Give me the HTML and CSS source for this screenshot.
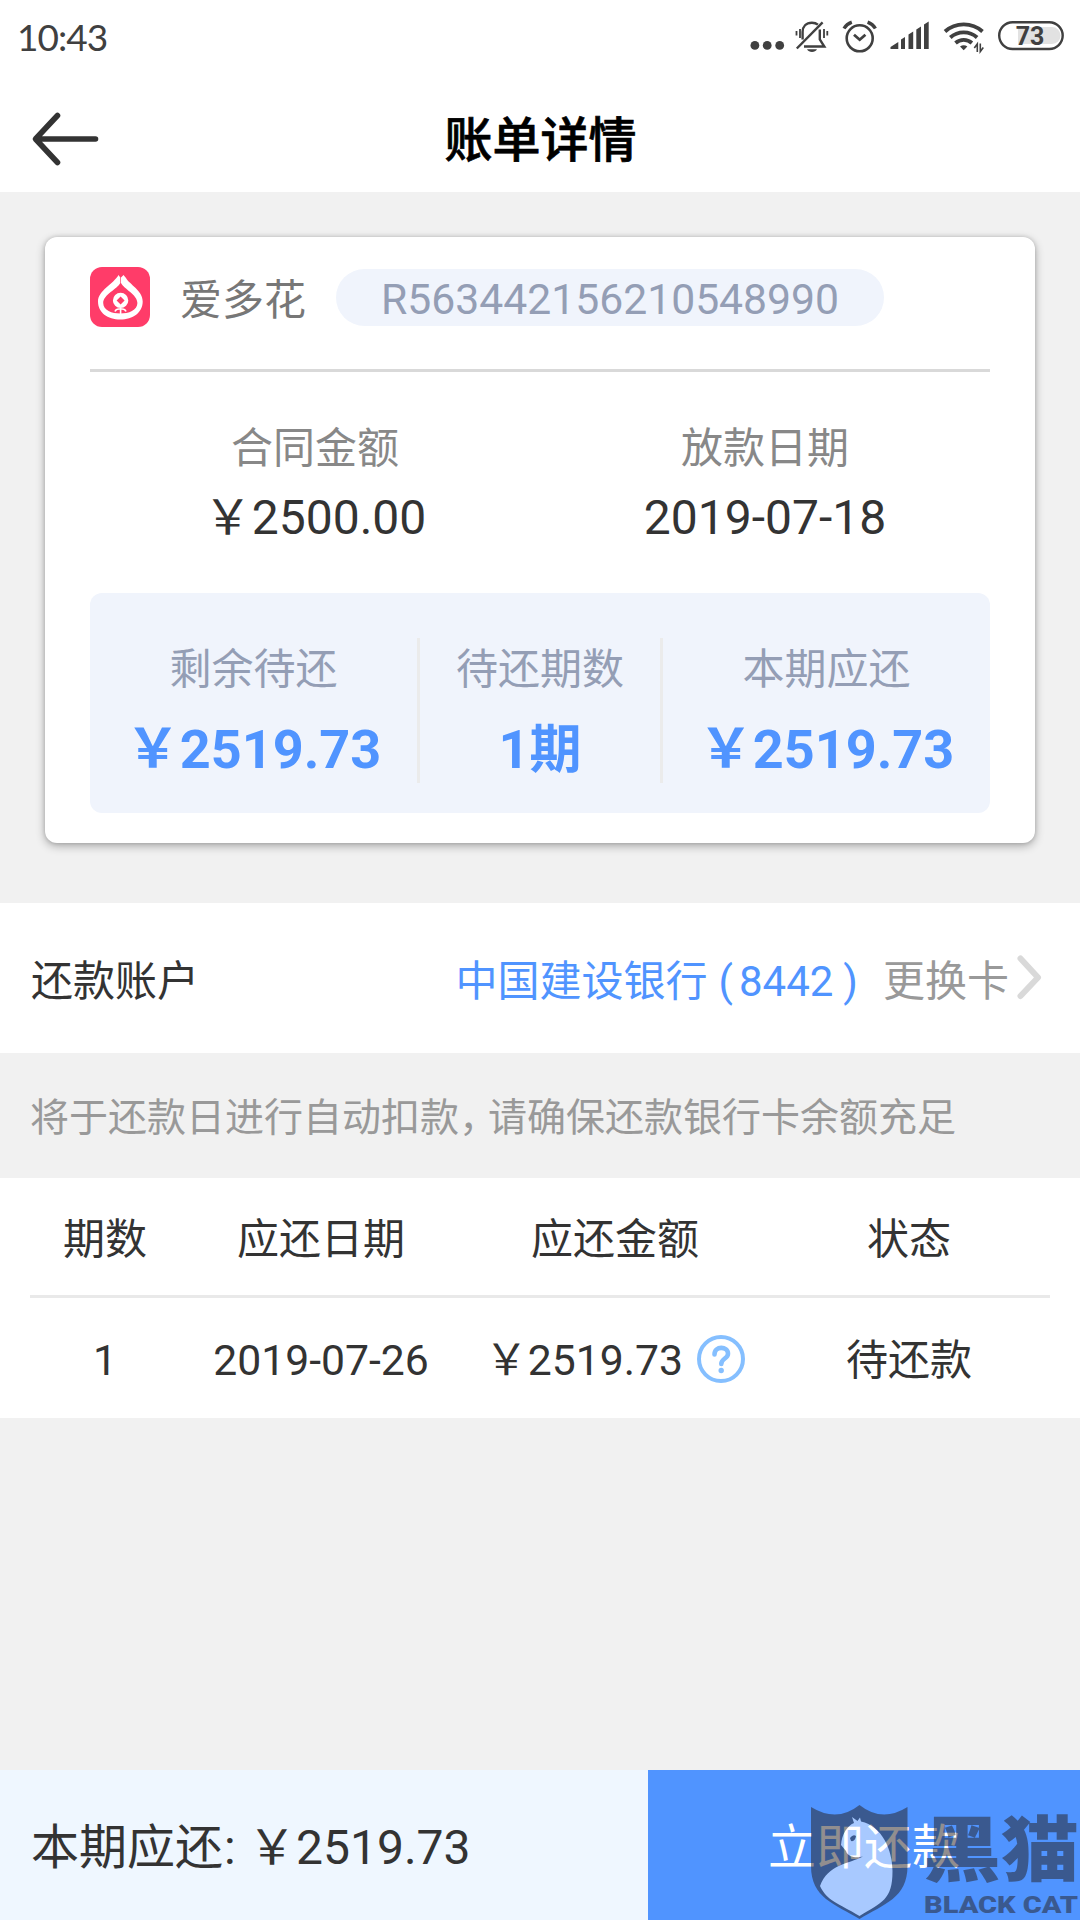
FILE: index.html
```html
<!DOCTYPE html>
<html lang="zh-CN">
<head>
  <meta charset="UTF-8">
  <meta name="viewport" content="width=device-width, initial-scale=1.0">
  <title>账单详情</title>
  <link rel="stylesheet" href="styles.css">
</head>
<body>
  <div class="page">
    <div class="status-bar">
      <span class="time">10:43</span>
      <div class="status-icons">
        <svg width="40" height="60" viewBox="0 0 40 60" fill="#404040">
          <circle cx="4.9" cy="45.4" r="4.4"/><circle cx="17.2" cy="45.4" r="4.4"/><circle cx="29.7" cy="45.4" r="4.4"/>
        </svg>
        <svg width="44" height="60" viewBox="0 0 44 60" fill="none" stroke="#404040" stroke-width="2.4">
          <path d="M12.6 39.5V32c0-5.5 3.5-9.3 9.3-9.3 2.5 0 4.5 0.7 6 2"/>
          <path d="M29.8 29.5V39.5L34.3 46.5H14"/>
          <path d="M6.8 48.5L32.6 22.3"/>
          <path d="M17 49.3h10c-1 1.9-2.8 2.7-5 2.7s-4-.8-5-2.7z" fill="#404040" stroke="none"/>
          <path d="M6.5 31v4.5M10 29v9M34 29v9M37.3 31v4.5" stroke-width="1.8"/>
        </svg>
        <svg width="50" height="60" viewBox="0 0 50 60" fill="none" stroke="#404040" stroke-width="2.6">
          <circle cx="25.7" cy="38.3" r="13"/>
          <path d="M20 34.7l5.7 5 5.7-5" stroke-width="2.8"/>
          <path d="M10 28.5c1.8-3 4.3-5 7.8-6.3M41.4 28.5c-1.8-3-4.3-5-7.8-6.3" stroke-width="3.4"/>
        </svg>
        <svg width="52" height="60" viewBox="0 0 52 60" fill="#404040">
          <path d="M6.5 49v-2l7.8-5V49zM17 49V39.5l4-2.5V49zM24.5 49V34.5l4.7-3V49zM32.3 49V29.5l4.7-3V49zM40 49V24.5l4.7-3V49z"/>
        </svg>
        <svg width="54" height="60" viewBox="0 0 54 60" fill="none" stroke="#404040" stroke-width="3.8">
          <path d="M9 31.5c10.5-9.5 27-9.5 37.5 0M14.3 37.5c7.5-6.8 19.3-6.8 26.8 0M19.5 43c4.7-4.2 11.7-4.2 16.4 0"/>
          <path d="M24 46.5q3.7-2.6 7.4 0l-3.7 3.8z" fill="#404040" stroke="none"/>
          <path d="M41.3 52v-8l-3 4M44.3 43.5v8l3-4" stroke-width="1.6"/>
        </svg>
        <svg width="80" height="60" viewBox="0 0 80 60">
          <path d="M28 27h34a8.5 8.5 0 0 1 0 17H28z" fill="#e2e2e2"/>
          <rect x="9.2" y="22.2" width="63.5" height="26.8" rx="13.4" fill="none" stroke="#404040" stroke-width="2.4"/>
          <text x="40" y="44.7" class="battery-text">73</text>
        </svg>
      </div>
    </div>

    <div class="nav">
      <svg class="back" width="70" height="60" viewBox="0 0 70 60" fill="none" stroke="#333" stroke-width="5.6" stroke-linecap="round" stroke-linejoin="round">
        <path d="M65.5 30H6M27.5 6.5L5.5 30L27.5 53.5"/>
      </svg>
      <h1>账单详情</h1>
    </div>

    <div class="card">
      <div class="card-head">
        <svg class="logo" width="60" height="60" viewBox="0 0 60 60">
          <rect width="60" height="60" rx="12" fill="#ff3c69"/>
          <path fill="#fff" d="M28.5 8L30.3 10.5V16C27.5 22 13.2 27.5 13.2 36C13.2 43.5 22 46.5 30.3 46.5S47.4 43.5 47.4 36C47.4 27.5 33.8 22 31 16V10.5L33.5 8L36 11C39.5 17.5 52.7 23.5 52.7 34.5C52.7 45.5 43 52.5 30.3 52.5S8 45.5 8 34.5C8 23.5 23.5 17 28.5 8Z"/>
          <path fill="#fff" fill-rule="evenodd" d="M30.6 25.7a7.7 7.7 0 1 1 0 15.4a7.7 7.7 0 1 1 0-15.4zM30.6 29.4l-4 4 4 4 4-4z"/>
          <path fill="none" stroke="#fff" stroke-width="1.6" d="M30.6 41v7M25 44.5q1-3 5-2.5M36 44.5q-1-3-5-2.5"/>
        </svg>
        <span class="brand">爱多花</span>
        <span class="order-no">R563442156210548990</span>
      </div>
      <div class="summary">
        <div class="summary-item">
          <p class="label">合同金额</p>
          <p class="value">￥2500.00</p>
        </div>
        <div class="summary-item">
          <p class="label">放款日期</p>
          <p class="value">2019-07-18</p>
        </div>
      </div>
      <div class="panel">
        <div class="panel-item">
          <p class="label">剩余待还</p>
          <p class="amount">￥2519.73</p>
        </div>
        <div class="panel-item middle">
          <p class="label">待还期数</p>
          <p class="amount">1<span class="unit">期</span></p>
        </div>
        <div class="panel-item">
          <p class="label">本期应还</p>
          <p class="amount">￥2519.73</p>
        </div>
      </div>
    </div>

    <div class="account">
      <span>还款账户</span>
      <span class="bank">中国建设银行<span class="paren-l">(</span>8442<span class="paren-r">)</span></span>
      <span class="change">更换卡</span>
      <svg width="28" height="46" viewBox="0 0 28 46" fill="none" stroke="#d9d9d9" stroke-width="6" stroke-linecap="round" stroke-linejoin="round">
        <path d="M4.5 4.5L22 23.5L4.5 42"/>
      </svg>
    </div>

    <p class="notice">将于还款日进行自动扣款<span class="comma">，</span>请确保还款银行卡余额充足</p>

    <div class="plan">
      <div class="plan-row plan-head">
        <span>期数</span>
        <span>应还日期</span>
        <span>应还金额</span>
        <span>状态</span>
      </div>
      <div class="plan-row">
        <span>1</span>
        <span>2019-07-26</span>
        <span class="due">￥2519.73
          <svg width="48" height="48" viewBox="0 0 48 48" fill="none" stroke="#85bfff">
            <circle cx="24" cy="24" r="22" stroke-width="4"/>
            <path d="M17.5 19.5c0-9 13.5-8.5 13.5-.8 0 5-6.7 4.7-6.7 10.3" stroke-width="4.6" stroke-linecap="round"/>
            <circle cx="24.2" cy="35.5" r="2.7" fill="#85bfff" stroke="none"/>
          </svg>
        </span>
        <span class="state">待还款</span>
      </div>
    </div>

    <div class="footer">
      <div class="total">本期应还<span class="colon">:</span>￥2519.73</div>
      <div class="pay">立即还款
        <svg class="watermark" width="272" height="118" viewBox="0 0 272 118">
          <path fill="#262021" d="M3 5Q29 21 51.5 3Q74 21 99.5 5V64C99.5 96 76 102 51.5 117C27 102 3 96 3 64Z"/>
          <path fill="#fff" d="M44 15L49.5 19L52 15.5L53 19.5C74 24 84.5 48 84.5 69C84.5 98 74 100 51.5 114C30 101 19 99 12 84C20 62 41 62 55 54.5C50 56 40 56 38 49L33 43C34 32 39 24 46 21Z"/>
          <path fill="#262021" d="M42 36q3-4 6-2-1 6-5 5z"/>
          <text class="wm-name" x="115" y="73" textLength="156" lengthAdjust="spacingAndGlyphs">黑猫</text>
          <text class="wm-en" x="116" y="111" textLength="154" lengthAdjust="spacingAndGlyphs">BLACK CAT</text>
        </svg>
      </div>
    </div>
  </div>
</body>
</html>
```
FILE: styles.css
```css
* {
  box-sizing: border-box;
}

body {
  margin: 0;
  background-color: #f1f1f1;
  font-family: Roboto, "Noto Sans CJK SC", sans-serif;
  font-size: 42px;
  color: #333;
}

p, h1 {
  margin: 0;
}

svg {
  display: block;
  flex-shrink: 0;
}

.page {
  display: flex;
  flex-direction: column;
  width: 1080px;
  height: 1920px;
  overflow: hidden;
}

/* status bar */
.status-bar {
  display: flex;
  justify-content: space-between;
  height: 84px;
  padding: 0 10px 0 17px;
  background-color: #fff;
}

.time {
  font-family: Lato, Roboto, sans-serif;
  font-size: 37px;
  line-height: 73px;
  letter-spacing: -1px;
  color: #404040;
}

.status-icons {
  display: flex;
}

.battery-text {
  font-size: 25px;
  font-weight: 700;
  text-anchor: middle;
  fill: #404040;
}

/* title */
.nav {
  display: flex;
  align-items: center;
  height: 108px;
  padding: 0 30px;
  background-color: #fff;
}

h1 {
  flex: 1;
  margin-right: 69px;
  padding-top: 6px;
  font-size: 48px;
  line-height: 60px;
  font-weight: 500;
  -webkit-text-stroke: 0.7px #000;
  color: #000;
  text-align: center;
}

.back {
  margin-top: 2px;
}

/* bill card */
.card {
  height: 606px;
  margin: 45px 45px 60px;
  padding: 0 45px;
  background-color: #fff;
  border-radius: 12px;
  box-shadow: 0 3px 10px rgba(0, 0, 0, 0.3), 0 0 4px rgba(0, 0, 0, 0.15);
}

.card-head {
  display: flex;
  align-items: center;
  height: 135px;
  padding-bottom: 12px;
  border-bottom: 3px solid #d9d9d9;
}

.brand {
  margin: -1px 0 0 30px;
  color: #777;
}

.order-no {
  width: 548px;
  height: 57px;
  margin-left: 30px;
  border-radius: 29px;
  background-color: #f0f4fc;
  color: #949eb5;
  font-size: 42.7px;
  line-height: 60px;
  text-align: center;
}

.summary {
  display: flex;
  height: 221px;
  padding-top: 46px;
}

.summary-item {
  flex: 1;
  text-align: center;
}

.label {
  line-height: 62px;
  color: #888;
}

.value {
  margin-top: 3px;
  font-size: 48px;
  line-height: 70px;
}

.panel {
  display: flex;
  height: 220px;
  padding: 45px 0 30px;
  border-radius: 12px;
  background-color: #f0f4fc;
}

.panel-item {
  width: 327px;
  text-align: center;
}

.panel-item.middle {
  width: 246px;
  border-left: 3px solid #ebebeb;
  border-right: 3px solid #ebebeb;
}

.panel .label {
  padding-top: 1px;
  color: #949eb5;
}

.amount {
  margin-top: 11px;
  font-size: 54px;
  line-height: 75px;
  font-weight: 700;
  color: #5094ff;
}

.unit {
  font-size: 52px;
}

/* repayment account */
.account {
  display: flex;
  align-items: center;
  height: 150px;
  padding: 0 36px 2px 31px;
  background-color: #fff;
}

.bank {
  margin-left: auto;
  color: #5094ff;
}

.paren-l {
  margin: 0 6px 0 11px;
}

.paren-r {
  margin: 0 25px 0 10px;
}

.change {
  margin-right: 7px;
  color: #999;
}

.notice {
  height: 125px;
  padding-left: 30px;
  font-size: 39px;
  line-height: 131px;
  color: #999;
}

.comma {
  letter-spacing: -10px;
}

/* repayment plan */
.plan {
  height: 240px;
  padding: 0 30px;
  background-color: #fff;
}

.plan-row {
  display: grid;
  grid-template-columns: 150px 282px 306px 282px;
  align-items: center;
  height: 120px;
  padding-top: 4px;
  text-align: center;
  font-size: 42.7px;
  line-height: 50px;
}

.plan-head {
  padding-top: 6px;
  font-size: 42px;
  border-bottom: 3px solid #e9e9e9;
}

.due {
  display: flex;
  align-items: center;
  justify-content: center;
}

.due svg {
  margin: -2px 0 0 14px;
}

.state {
  padding-top: 2px;
  font-size: 42px;
}

/* bottom bar */
.footer {
  display: flex;
  height: 150px;
  margin-top: auto;
  font-size: 48px;
  line-height: 156px;
}

.total {
  width: 648px;
  padding-left: 31px;
  background-color: #eff7ff;
}

.colon {
  display: inline-block;
  width: 25px;
  padding-left: 1px;
}

.pay {
  position: relative;
  width: 432px;
  background-color: #5094ff;
  color: #fff;
  text-align: center;
}

.watermark {
  position: absolute;
  right: 0;
  bottom: 0;
  opacity: 0.5;
}

.wm-name {
  font-size: 71px;
  font-weight: 900;
  fill: #262021;
}

.wm-en {
  font-size: 24px;
  font-weight: 900;
  fill: #262021;
}
```
